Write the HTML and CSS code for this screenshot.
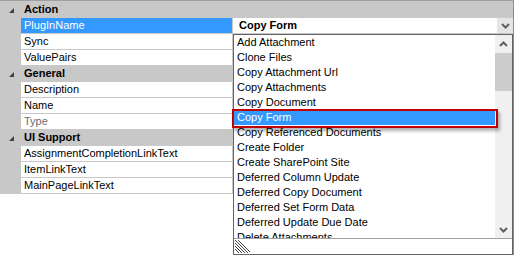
FILE: index.html
```html
<!DOCTYPE HTML>
<html lang="en">
<head>
    <meta charset="UTF-8">
    <title>Property Grid</title>
    <link rel="stylesheet" href="styles.css">
</head>
<body>
    <div class="grid">
        <div class="row cat first">
            <div class="margin"><svg class="glyph" width="5" height="5" viewBox="0 0 5 5"><polygon points="5,0 5,5 0,5"/></svg></div>
            <div class="cat-name">Action</div>
        </div>
        <div class="row prop selected">
            <div class="margin"></div>
            <div class="name">PlugInName</div>
            <div class="value bold">Copy Form
                <span class="drop-btn"><svg width="9" height="6" viewBox="0 0 9 6"><polyline points="1,1 4.5,4.5 8,1"/></svg></span>
            </div>
        </div>
        <div class="row prop">
            <div class="margin"></div>
            <div class="name">Sync</div>
            <div class="value"></div>
        </div>
        <div class="row prop">
            <div class="margin"></div>
            <div class="name">ValuePairs</div>
            <div class="value"></div>
        </div>
        <div class="row cat">
            <div class="margin"><svg class="glyph" width="5" height="5" viewBox="0 0 5 5"><polygon points="5,0 5,5 0,5"/></svg></div>
            <div class="cat-name">General</div>
        </div>
        <div class="row prop">
            <div class="margin"></div>
            <div class="name">Description</div>
            <div class="value"></div>
        </div>
        <div class="row prop">
            <div class="margin"></div>
            <div class="name">Name</div>
            <div class="value"></div>
        </div>
        <div class="row prop readonly">
            <div class="margin"></div>
            <div class="name">Type</div>
            <div class="value"></div>
        </div>
        <div class="row cat">
            <div class="margin"><svg class="glyph" width="5" height="5" viewBox="0 0 5 5"><polygon points="5,0 5,5 0,5"/></svg></div>
            <div class="cat-name">UI Support</div>
        </div>
        <div class="row prop">
            <div class="margin"></div>
            <div class="name">AssignmentCompletionLinkText</div>
            <div class="value"></div>
        </div>
        <div class="row prop">
            <div class="margin"></div>
            <div class="name">ItemLinkText</div>
            <div class="value"></div>
        </div>
        <div class="row prop">
            <div class="margin"></div>
            <div class="name">MainPageLinkText</div>
            <div class="value"></div>
        </div>

        <!-- dropdown list of plug-ins -->
        <div class="dropdown">
            <div class="list-area">
                <ul class="items">
                    <li>Add Attachment</li>
                    <li>Clone Files</li>
                    <li>Copy Attachment Url</li>
                    <li>Copy Attachments</li>
                    <li>Copy Document</li>
                    <li class="active">Copy Form</li>
                    <li>Copy Referenced Documents</li>
                    <li>Create Folder</li>
                    <li>Create SharePoint Site</li>
                    <li>Deferred Column Update</li>
                    <li>Deferred Copy Document</li>
                    <li>Deferred Set Form Data</li>
                    <li>Deferred Update Due Date</li>
                    <li>Delete Attachments</li>
                </ul>
                <div class="scrollbar">
                    <div class="arrow"><svg width="9" height="6" viewBox="0 0 9 6"><polyline points="1,5 4.5,1.5 8,5"/></svg></div>
                    <div class="track"><div class="thumb"></div></div>
                    <div class="arrow"><svg width="9" height="6" viewBox="0 0 9 6"><polyline points="1,1 4.5,4.5 8,1"/></svg></div>
                </div>
            </div>
            <div class="grip">
                <svg width="15" height="13" viewBox="0 0 15 13">
                    <line x1="0" y1="0" x2="13" y2="13"/>
                    <line x1="0" y1="3" x2="10" y2="13"/>
                    <line x1="0" y1="6" x2="7" y2="13"/>
                    <line x1="0" y1="9" x2="4" y2="13"/>
                    <line x1="3" y1="0" x2="16" y2="13"/>
                </svg>
            </div>
        </div>

        <!-- red annotation box -->
        <div class="highlight-box"></div>
    </div>
</body>
</html>
```

FILE: styles.css
```css
/* Page */
body {
    margin: 0;
    background-color: #fff;
    font-family: "Liberation Sans", Arial, sans-serif;
    font-size: 11px;
    color: #000;
}

/* Property grid */
.grid {
    position: relative;
    width: 513px;
    height: 254px;
    border-top: 1px solid #a0a0a0;
    border-right: 1px solid #8c8c8c;
    background-color: #fff;
}

.row {
    display: grid;
    grid-template-columns: 21px 212px 1fr;
    height: 16px;
    box-sizing: border-box;
    line-height: 15px;
}

.margin {
    background-color: #c8c8c8;
    display: flex;
    align-items: center;
    justify-content: center;
}

.glyph {
    fill: #404040;
    margin-left: 1px;
}

/* Category rows */
.cat {
    background-color: #c8c8c8;
}

.cat.first {
    height: 17px;
    padding-top: 1px;
}

.cat-name {
    grid-column: 2 / 4;
    font-weight: bold;
    padding-left: 3px;
}

/* Property rows */
.prop .name {
    padding-left: 3px;
    border-bottom: 1px solid #c8c8c8;
    border-right: 1px solid #c8c8c8;
    white-space: nowrap;
    overflow: hidden;
}

.prop .value {
    position: relative;
    padding-left: 6px;
    border-bottom: 1px solid #c8c8c8;
}

.value.bold {
    font-weight: bold;
}

.selected .name {
    background-color: #3399ff;
    color: #fff;
}

.readonly .name {
    color: #6d6d6d;
}

.drop-btn {
    position: absolute;
    right: 0;
    top: 0;
    width: 16px;
    height: 15px;
    background-color: #e5e5e5;
    display: flex;
    align-items: center;
    justify-content: center;
}

.drop-btn svg,
.arrow svg {
    fill: none;
    stroke: #606060;
    stroke-width: 2;
}

/* Dropdown list */
.dropdown {
    position: absolute;
    left: 233px;
    top: 33px;
    width: 280px;
    height: 221px;
    border: 1px solid #646464;
    box-sizing: border-box;
    background-color: #fff;
    display: flex;
    flex-direction: column;
}

.list-area {
    display: flex;
    height: 203px;
    border-bottom: 1px solid #a0a0a0;
}

.items {
    flex: 1;
    list-style: none;
    margin: 0;
    padding: 0;
    overflow: hidden;
}

.items li {
    height: 15px;
    line-height: 15px;
    padding-left: 3px;
    white-space: nowrap;
}

.items li.active {
    background-color: #3399ff;
    color: #fff;
}

.scrollbar {
    width: 17px;
    display: flex;
    flex-direction: column;
    background-color: #f0f0f0;
}

.arrow {
    height: 17px;
    display: flex;
    align-items: center;
    justify-content: center;
}

.track {
    flex: 1;
    padding-top: 1px;
}

.thumb {
    height: 38px;
    background-color: #cdcdcd;
}

.grip {
    flex: 1;
    padding: 1px 0 0 1px;
}

.grip svg {
    stroke: #404040;
    stroke-width: 1;
}

/* Annotation */
.highlight-box {
    position: absolute;
    left: 232px;
    top: 108px;
    width: 266px;
    height: 19px;
    border: 2px solid #c00000;
    box-sizing: border-box;
    box-shadow: 2px 3px 3px rgba(0, 0, 0, 0.3);
}
```
